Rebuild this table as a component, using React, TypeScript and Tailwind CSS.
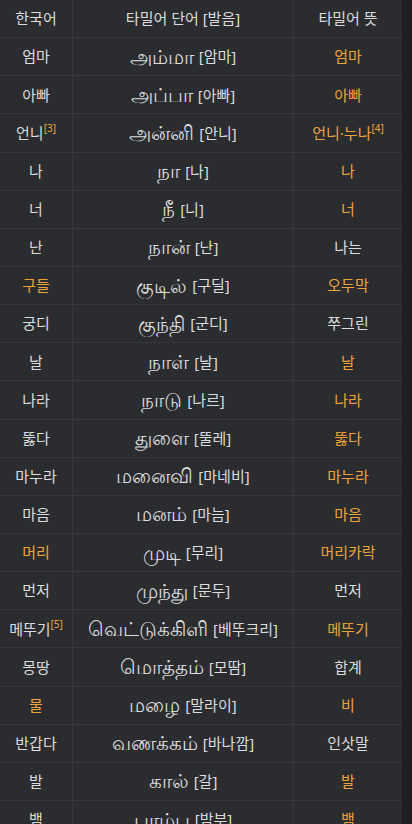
const rows: [string, string, string, string, string, boolean, boolean][] = [
  ['엄마', '', 'அம்மா', '[암마]', '엄마', false, true],
  ['아빠', '', 'அப்பா', '[아빠]', '아빠', false, true],
  ['언니', '[3]', 'அன்னி', '[안니]', '언니·누나', false, true],
  ['나', '', 'நா', '[나]', '나', false, true],
  ['너', '', 'நீ', '[니]', '너', false, true],
  ['난', '', 'நான்', '[난]', '나는', false, false],
  ['구들', '', 'குடில்', '[구딜]', '오두막', true, true],
  ['궁디', '', 'குந்தி', '[군디]', '쭈그린', false, false],
  ['날', '', 'நாள்', '[날]', '날', false, true],
  ['나라', '', 'நாடு', '[나르]', '나라', false, true],
  ['뚫다', '', 'துளை', '[뚤레]', '뚫다', false, true],
  ['마누라', '', 'மனைவி', '[마네비]', '마누라', false, true],
  ['마음', '', 'மனம்', '[마늠]', '마음', false, true],
  ['머리', '', 'முடி', '[무리]', '머리카락', true, true],
  ['먼저', '', 'முந்து', '[문두]', '먼저', false, false],
  ['메뚜기', '[5]', 'வெட்டுக்கிளி', '[베뚜크리]', '메뚜기', false, true],
  ['몽땅', '', 'மொத்தம்', '[모땀]', '합계', false, false],
  ['물', '', 'மழை', '[말라이]', '비', true, true],
  ['반갑다', '', 'வணக்கம்', '[바나깜]', '인삿말', false, false],
  ['발', '', 'கால்', '[갈]', '발', false, true],
  ['뱀', '', 'பாம்பு', '[밤부]', '뱀', false, true],
]

const cell = 'flex items-center justify-center h-[38.15px] border-b border-[#37383c] whitespace-nowrap'

export default function App() {
  return (
    <div className="h-[824px] overflow-hidden bg-[#1e1f22] font-['Noto_Sans','Noto_Sans_CJK_KR',sans-serif] text-[15px] text-[#dcdcdc]">
      <div className="w-[402px] bg-[#2b2c30] grid grid-cols-[73px_221px_108px]">
        <div className={`${cell} border-r`}>한국어</div>
        <div className={`${cell} border-r`}>타밀어 단어 [발음]</div>
        <div className={cell}>타밀어 뜻</div>
        {rows.map(([ko, note, ta, pron, mean, koOrange, meanOrange], i) => (
          <div key={i} className="contents">
            <div className={`${cell} border-r ${koOrange ? 'text-[#eea33a]' : ''}`}>
              {ko}
              {note && <sup className="text-[10px] text-[#eea33a] -top-[0.45em]">{note}</sup>}
            </div>
            <div className={`${cell} border-r gap-[5px]`}>
              <span className="text-[20px] leading-none">{ta}</span>
              <span>{pron}</span>
            </div>
            <div className={`${cell} ${meanOrange ? 'text-[#eea33a]' : ''}`}>
              {mean}
              {i === 2 && <sup className="text-[10px] text-[#eea33a] -top-[0.45em]">[4]</sup>}
            </div>
          </div>
        ))}
      </div>
    </div>
  )
}
